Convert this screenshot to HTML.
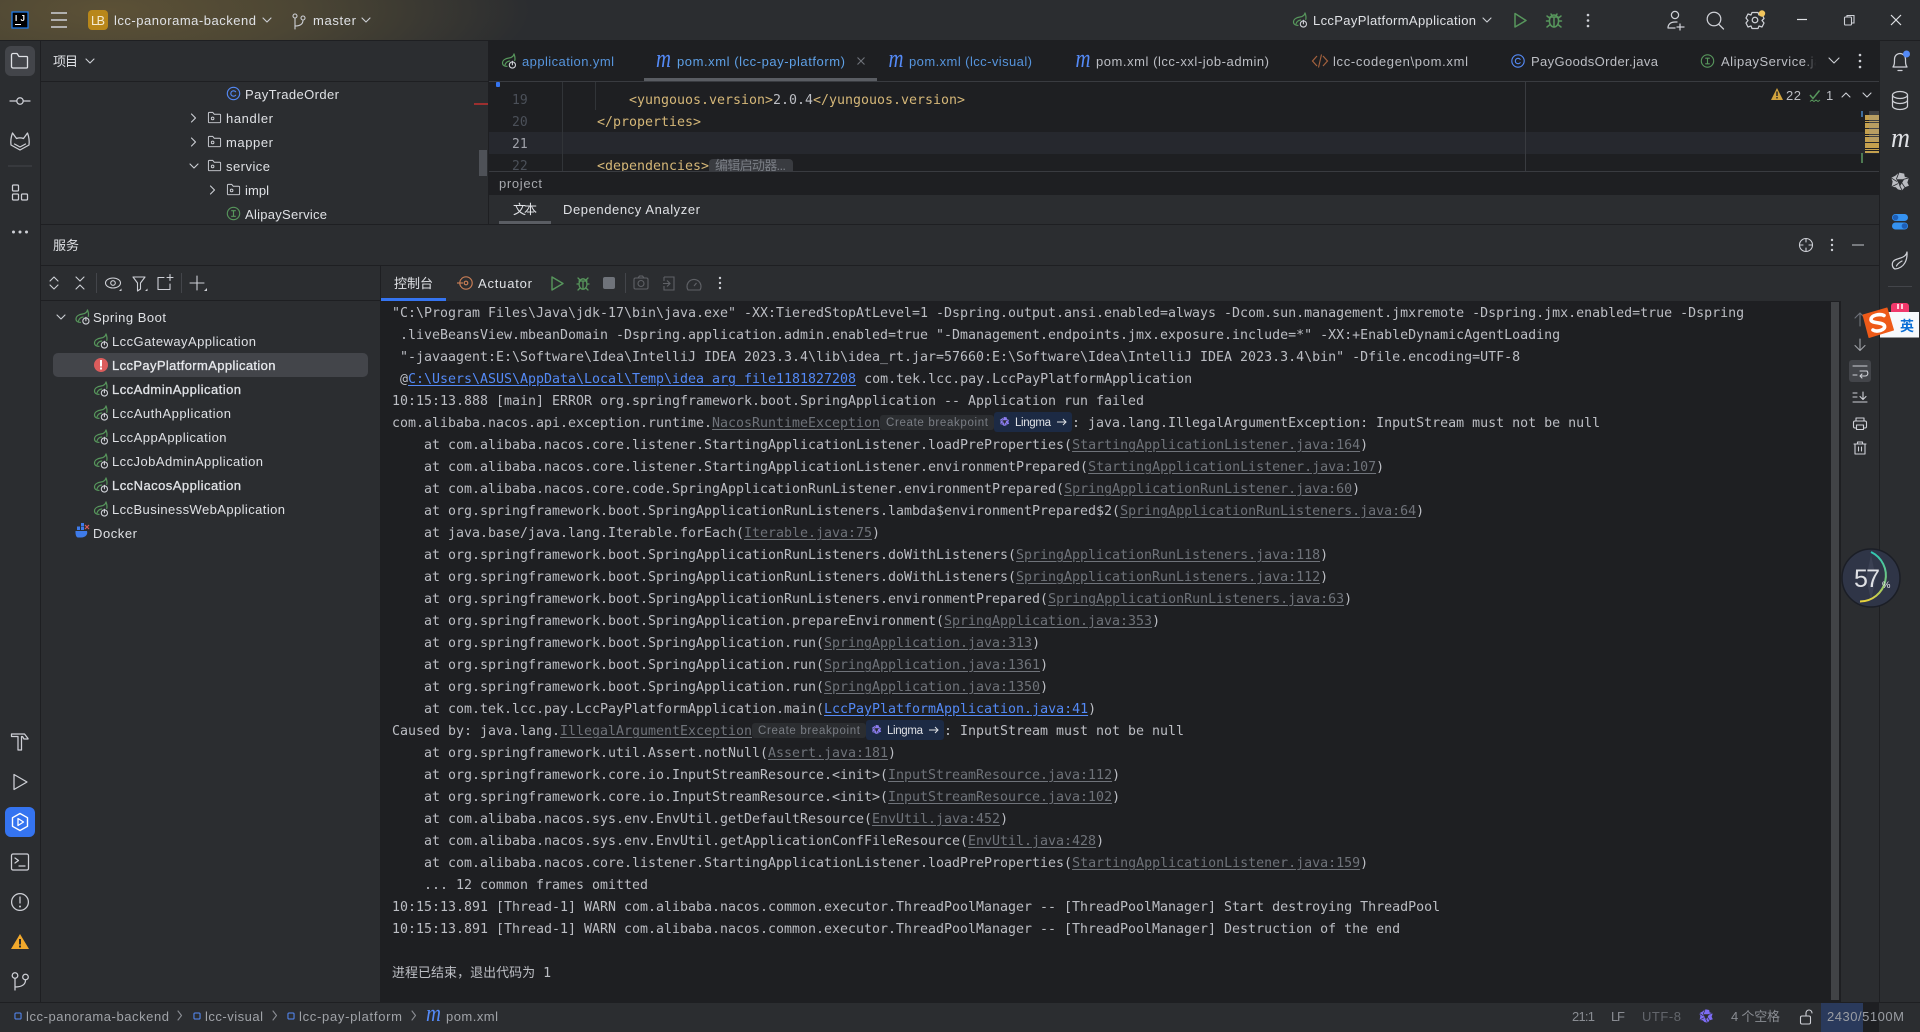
<!DOCTYPE html>
<html lang="zh"><head><meta charset="utf-8"><title>lcc-panorama-backend</title>
<style>
html,body{margin:0;padding:0;background:#2b2d30;width:1920px;height:1032px;overflow:hidden}
.p{position:absolute}
#console,#code{font-family:"DejaVu Sans Mono","Noto Sans CJK SC",monospace;font-size:13.28px;line-height:22px;white-space:pre;color:#bcbec4;position:absolute;overflow:hidden;letter-spacing:.014px}
#console{left:392px;top:303px;width:1436px;height:698px}
#console div{height:22px}
#console u{color:#6f737a;text-decoration:underline;text-underline-offset:2px}
#console b{font-weight:normal;color:#548af7;text-decoration:underline;text-underline-offset:2px}
#console i{display:inline-block;font-style:normal;width:192px}
#console em{font-style:normal;font-size:13px}
#code{left:597px;top:81px;width:900px;height:90px}
#code div{height:22px;color:#d5b778}
#code s{text-decoration:none;color:#bcbec4}
svg{position:absolute;left:0;top:0}
svg text{font-family:"Liberation Sans","Noto Sans CJK SC",sans-serif;font-size:13px;fill:#dfe1e5}
.st{fill:none;stroke:#ced0d6;stroke-width:1.25;stroke-linecap:round;stroke-linejoin:round}
.d{fill:none;stroke:#ced0d6;stroke-width:1.1;stroke-linecap:round;stroke-linejoin:round}
.dc{fill:none;stroke:#8a8d93;stroke-width:1.1;stroke-linecap:round;stroke-linejoin:round}
</style></head><body>

<div class="p" style="left:0;top:0;width:1920px;height:40px;background:radial-gradient(ellipse 420px 110px at 110px 10px,#5c5136 0,#4c4634 45%,#2b2d30 100%)"></div>
<div class="p" style="left:0;top:40px;width:1920px;height:1px;background:#1e1f22"></div>
<div class="p" style="left:40px;top:41px;width:1px;height:962px;background:#1e1f22"></div>
<div class="p" style="left:1879px;top:41px;width:1px;height:962px;background:#1e1f22"></div>

<!-- project panel -->
<div class="p" style="left:41px;top:81px;width:447px;height:1px;background:#1e1f22"></div>
<div class="p" style="left:488px;top:41px;width:1px;height:184px;background:#1e1f22"></div>
<div class="p" style="left:474px;top:103px;width:14px;height:2px;background:#9c2f2f"></div>
<div class="p" style="left:479px;top:150px;width:8px;height:26px;background:#4e5157"></div>

<!-- editor -->
<div class="p" style="left:489px;top:41px;width:1390px;height:40px;background:#1e1f22"></div>
<div class="p" style="left:489px;top:81px;width:1390px;height:1px;background:#393b40"></div>
<div class="p" style="left:644px;top:78px;width:233px;height:3px;background:#5a5d63"></div>
<div class="p" style="left:489px;top:82px;width:1390px;height:89px;background:#1e1f22"></div>
<div class="p" style="left:489px;top:132px;width:1390px;height:22px;background:#26282e"></div>
<div class="p" style="left:562px;top:82px;width:1px;height:89px;background:#313438"></div>
<div class="p" style="left:595px;top:82px;width:1px;height:28px;background:#313438"></div>
<div class="p" style="left:1525px;top:82px;width:1px;height:89px;background:#393b40"></div>
<div class="p" style="left:496px;top:82px;width:4px;height:5px;background:#3574f0;border-radius:1px"></div>
<div id="code"><div style="height:9px"></div><div>    &lt;yungouos.version&gt;<s>2.0.4</s>&lt;/yungouos.version&gt;</div><div>&lt;/properties&gt;</div><div></div><div>&lt;dependencies&gt;</div></div>
<div class="p" style="left:709px;top:159px;width:84px;height:12px;background:#393b40;border-radius:4px 4px 0 0"></div>
<div class="p" style="left:489px;top:171px;width:1390px;height:1px;background:#393b40"></div>
<div class="p" style="left:489px;top:172px;width:1390px;height:23px;background:#1e1f22"></div>
<div class="p" style="left:489px;top:195px;width:1390px;height:28px;background:#2b2d30"></div>
<div class="p" style="left:499px;top:221px;width:52px;height:3px;background:#5a5d63"></div>
<div class="p" style="left:41px;top:224px;width:1838px;height:1px;background:#1e1f22"></div>
<div class="p" style="left:41px;top:265px;width:1838px;height:1px;background:#1e1f22"></div>

<!-- minimap -->
<div class="p" style="left:1861px;top:111px;width:2px;height:6px;background:#3f6d9c"></div>
<div class="p" style="left:1865px;top:115px;width:14px;height:38px;background:repeating-linear-gradient(180deg,#c4a04e 0 5px,#1e1f22 5px 6px,#c4a04e 6px 7px,#1e1f22 7px 8px,#c4a04e 8px 13px,#26282e 13px 14px)"></div>
<div class="p" style="left:1869px;top:111px;width:10px;height:30px;background:rgba(150,150,150,.28)"></div>
<div class="p" style="left:1861px;top:153px;width:2px;height:10px;background:#4e7a52"></div>

<!-- services -->
<div class="p" style="left:380px;top:266px;width:1px;height:737px;background:#1e1f22"></div>
<div class="p" style="left:41px;top:300px;width:339px;height:1px;background:#1e1f22"></div>
<div class="p" style="left:53px;top:353px;width:315px;height:24px;background:#43454a;border-radius:5px"></div>
<div class="p" style="left:381px;top:298px;width:65px;height:3px;background:#3574f0"></div>
<div class="p" style="left:381px;top:301px;width:1459px;height:702px;background:#1e1f22"></div>
<div class="p" style="left:1831px;top:302px;width:8px;height:698px;background:#414346"></div>
<div class="p" style="left:1840px;top:301px;width:1px;height:702px;background:#1e1f22"></div>

<div id="console"><div>"C:\Program Files\Java\jdk-17\bin\java.exe" -XX:TieredStopAtLevel=1 -Dspring.output.ansi.enabled=always -Dcom.sun.management.jmxremote -Dspring.jmx.enabled=true -Dspring</div><div> .liveBeansView.mbeanDomain -Dspring.application.admin.enabled=true "-Dmanagement.endpoints.jmx.exposure.include=*" -XX:+EnableDynamicAgentLoading</div><div> "-javaagent:E:\Software\Idea\IntelliJ IDEA 2023.3.4\lib\idea_rt.jar=57660:E:\Software\Idea\IntelliJ IDEA 2023.3.4\bin" -Dfile.encoding=UTF-8</div><div> @<b>C:\Users\ASUS\AppData\Local\Temp\idea_arg_file1181827208</b> com.tek.lcc.pay.LccPayPlatformApplication</div><div>10:15:13.888 [main] ERROR org.springframework.boot.SpringApplication -- Application run failed</div><div>com.alibaba.nacos.api.exception.runtime.<u>NacosRuntimeException</u><i></i>: java.lang.IllegalArgumentException: InputStream must not be null</div><div>    at com.alibaba.nacos.core.listener.StartingApplicationListener.loadPreProperties(<u>StartingApplicationListener.java:164</u>)</div><div>    at com.alibaba.nacos.core.listener.StartingApplicationListener.environmentPrepared(<u>StartingApplicationListener.java:107</u>)</div><div>    at com.alibaba.nacos.core.code.SpringApplicationRunListener.environmentPrepared(<u>SpringApplicationRunListener.java:60</u>)</div><div>    at org.springframework.boot.SpringApplicationRunListeners.lambda$environmentPrepared$2(<u>SpringApplicationRunListeners.java:64</u>)</div><div>    at java.base/java.lang.Iterable.forEach(<u>Iterable.java:75</u>)</div><div>    at org.springframework.boot.SpringApplicationRunListeners.doWithListeners(<u>SpringApplicationRunListeners.java:118</u>)</div><div>    at org.springframework.boot.SpringApplicationRunListeners.doWithListeners(<u>SpringApplicationRunListeners.java:112</u>)</div><div>    at org.springframework.boot.SpringApplicationRunListeners.environmentPrepared(<u>SpringApplicationRunListeners.java:63</u>)</div><div>    at org.springframework.boot.SpringApplication.prepareEnvironment(<u>SpringApplication.java:353</u>)</div><div>    at org.springframework.boot.SpringApplication.run(<u>SpringApplication.java:313</u>)</div><div>    at org.springframework.boot.SpringApplication.run(<u>SpringApplication.java:1361</u>)</div><div>    at org.springframework.boot.SpringApplication.run(<u>SpringApplication.java:1350</u>)</div><div>    at com.tek.lcc.pay.LccPayPlatformApplication.main(<b>LccPayPlatformApplication.java:41</b>)</div><div>Caused by: java.lang.<u>IllegalArgumentException</u><i></i>: InputStream must not be null</div><div>    at org.springframework.util.Assert.notNull(<u>Assert.java:181</u>)</div><div>    at org.springframework.core.io.InputStreamResource.&lt;init&gt;(<u>InputStreamResource.java:112</u>)</div><div>    at org.springframework.core.io.InputStreamResource.&lt;init&gt;(<u>InputStreamResource.java:102</u>)</div><div>    at com.alibaba.nacos.sys.env.EnvUtil.getDefaultResource(<u>EnvUtil.java:452</u>)</div><div>    at com.alibaba.nacos.sys.env.EnvUtil.getApplicationConfFileResource(<u>EnvUtil.java:428</u>)</div><div>    at com.alibaba.nacos.core.listener.StartingApplicationListener.loadPreProperties(<u>StartingApplicationListener.java:159</u>)</div><div>    ... 12 common frames omitted</div><div>10:15:13.891 [Thread-1] WARN com.alibaba.nacos.common.executor.ThreadPoolManager -- [ThreadPoolManager] Start destroying ThreadPool</div><div>10:15:13.891 [Thread-1] WARN com.alibaba.nacos.common.executor.ThreadPoolManager -- [ThreadPoolManager] Destruction of the end</div><div></div><div><em>进程已结束，退出代码为</em> 1</div></div>

<!-- status bar -->
<div class="p" style="left:0;top:1002px;width:1920px;height:1px;background:#1e1f22"></div>
<div class="p" style="left:1821px;top:1003px;width:42px;height:29px;background:#2a3a5c"></div>
<div class="p" style="left:1863px;top:1003px;width:16px;height:29px;background:#1e1f22"></div>

<svg width="1920" height="1032" viewBox="0 0 1920 1032" xmlns="http://www.w3.org/2000/svg">
<defs>
<symbol id="spring" viewBox="0 0 16 16"><path d="M13 1C12.5 3.6 10.8 4.6 8 5C4.2 5.5 1.5 7.3 1.5 10C1.5 12.2 3.4 13.4 6 13.4" fill="none" stroke="#57965c" stroke-width="1.2" stroke-linecap="round"/><path d="M13 1C14 3.5 14.2 5.6 13.8 7.4M4 12C4.6 9.6 6.2 8.4 8.6 8" fill="none" stroke="#57965c" stroke-width="1.2" stroke-linecap="round"/><circle cx="11.4" cy="12" r="3.1" fill="none" stroke="#ced0d6" stroke-width="1.1"/><path d="M11.4 8.3V11.8" stroke="#ced0d6" stroke-width="1.1" stroke-linecap="round"/></symbol>
<symbol id="folder" viewBox="0 0 16 16"><path d="M1.5 3.5a1 1 0 0 1 1-1h3.6l1.6 2h5.8a1 1 0 0 1 1 1v7a1 1 0 0 1-1 1h-11a1 1 0 0 1-1-1z" fill="none" stroke="#ced0d6" stroke-width="1"/><circle cx="6" cy="9" r="1.4" fill="none" stroke="#ced0d6" stroke-width="1"/></symbol>
<symbol id="cls" viewBox="0 0 16 16"><circle cx="8" cy="8" r="6.6" fill="none" stroke="#548af7" stroke-width="1.2"/><path d="M10.3 6.2A2.9 2.9 0 1 0 10.3 9.8" fill="none" stroke="#548af7" stroke-width="1.2" stroke-linecap="round"/></symbol>
<symbol id="ifc" viewBox="0 0 16 16"><circle cx="8" cy="8" r="6.6" fill="none" stroke="#57965c" stroke-width="1.2"/><path d="M6 5h4M6 11h4M8 5v6" fill="none" stroke="#57965c" stroke-width="1.2" stroke-linecap="round"/></symbol>
<symbol id="mod" viewBox="0 0 10 10"><rect x="1.2" y="1.2" width="7.6" height="7.6" rx="1.2" fill="none" stroke="#548af7" stroke-width="1.3"/></symbol>
<symbol id="star" viewBox="0 0 20 20"><path d="M9 1.5L14 2.5L14.5 5.5L18.5 6.5L17 11L18.500 14L14.500 15.500L12 18.500L8 17.500L6 15.500L2 15L3 10L1.500 6.500L5.500 4.500Z" fill="currentColor"/><path d="M6.500 7.800H14L10 14.500Z" fill="#2b2d30"/><path d="M9 1.500L6.500 7.800M18.500 6.500L13.200 8M12 18.500L9.500 13.500M1.500 6.500L7 10M14.500 15.500L11.500 11M2 15L8 12" fill="none" stroke="#2b2d30" stroke-width=".8"/></symbol>
<linearGradient id="fade" x1="0" y1="0" x2="1" y2="0"><stop offset="0" stop-color="#1e1f22" stop-opacity="0"/><stop offset="1" stop-color="#1e1f22"/></linearGradient>
<linearGradient id="arc" x1="0" y1="0" x2="0" y2="1"><stop offset="0" stop-color="#2fc7b4"/><stop offset=".6" stop-color="#7ac77a"/><stop offset="1" stop-color="#e8d23c"/></linearGradient>
</defs>

<!-- TITLE BAR -->
<rect x="12" y="12" width="16" height="16" fill="#000" stroke="#1a7df2" stroke-width="1.2"/>
<text x="15" y="21" style="font-size:8px;font-weight:700;fill:#fff" textLength="10">IJ</text>
<rect x="15" y="24" width="6" height="1" fill="#fff"/>
<path d="M51 13H67M51 20H67M51 27H67" stroke="#ced0d6" stroke-width="1.4"/>
<rect x="88" y="10" width="20" height="20" rx="4" fill="#b8871a"/>
<text x="91" y="25" style="font-size:12.5px;fill:#f4ead0" textLength="14">LB</text>
<text x="114" y="25" textLength="142">lcc-panorama-backend</text>
<path d="M263 18l4 4 4-4" class="d"/>
<g class="d"><circle cx="295" cy="16" r="2"/><circle cx="303" cy="18" r="2"/><path d="M295 18V29M295 26C300 26 303 24 303 20"/></g>
<text x="313" y="25" textLength="43">master</text>
<path d="M362 18l4 4 4-4" class="d"/>
<use href="#spring" x="1292" y="12" width="16" height="16"/>
<text x="1313" y="25" textLength="163">LccPayPlatformApplication</text>
<path d="M1483 18l4 4 4-4" class="d"/>
<path d="M1515 13.5L1526 20.5L1515 27Z" fill="none" stroke="#57965c" stroke-width="1.5" stroke-linejoin="round"/>
<g fill="none" stroke="#57965c" stroke-width="1.5" stroke-linecap="round"><ellipse cx="1554" cy="21" rx="4.6" ry="6"/><path d="M1550 17h8M1554 17v10M1551 14l1 1.6M1557 14l-1 1.6M1547 16l2.5 2M1561 16l-2.5 2M1546.5 21h3M1558.5 21h3M1547 27l2.5-2M1561 27l-2.5-2"/></g>
<circle cx="1588" cy="15" r="1.3" fill="#ced0d6"/><circle cx="1588" cy="20.5" r="1.3" fill="#ced0d6"/><circle cx="1588" cy="26" r="1.3" fill="#ced0d6"/>
<g class="st"><circle cx="1675" cy="15" r="3.6"/><path d="M1668 28C1668 24 1671 22 1675 22H1677M1668 28H1675M1680 24V30M1677 27H1684"/></g>
<g class="st" stroke-width="1.5"><circle cx="1714" cy="19" r="6.8"/><path d="M1719 24.5L1723.5 29"/></g>
<g class="st"><circle cx="1755" cy="20" r="2.8"/><path d="M1752 12.5H1758L1759 15L1762 14L1764 18.5L1762 20.5L1764 23L1762 27L1759 26L1758 28.5H1752L1751 26L1748 27L1746 23L1748 20.5L1746 18L1748 14L1751 15Z"/></g>
<circle cx="1762" cy="13.5" r="3.2" fill="#f2c55c"/>
<path d="M1797 19.5H1807" stroke="#dfe1e5" stroke-width="1.2"/>
<g fill="none" stroke="#ced0d6" stroke-width="1.1"><rect x="1844.5" y="17" width="7" height="8" rx="1"/><path d="M1847 17V15.5h7v7.5h-2.5"/></g>
<path d="M1891 15L1901 25M1901 15L1891 25" stroke="#dfe1e5" stroke-width="1.2"/>

<!-- LEFT STRIPE -->
<rect x="5" y="46" width="30" height="30" rx="6" fill="#43454a"/>
<path d="M11.5 55a1.5 1.5 0 0 1 1.5-1.5h4l2 3h7.5a1 1 0 0 1 1 1V67a1 1 0 0 1-1 1H13a1.5 1.5 0 0 1-1.5-1.5z" fill="none" stroke="#dfe1e5" stroke-width="1.3" stroke-linejoin="round"/>
<g class="st"><circle cx="20" cy="101" r="3.2"/><path d="M10 101H16.8M23.2 101H30"/></g>
<path class="st" d="M12.500 133L16.500 138.500C18.500 137.800 21.500 137.800 23.500 138.500L27.500 133C29 137 29.500 141 29 145L20 150L11 145C10.500 141 11 137 12.500 133Z"/>
<path class="st" d="M14.500 144L20 147L25.500 144"/>
<rect x="8" y="165.5" width="24" height="1" fill="#43454a"/>
<g class="st"><rect x="12.5" y="185" width="6" height="6" rx="1"/><rect x="12.5" y="194" width="6" height="6" rx="1"/><rect x="21.5" y="194" width="6" height="6" rx="1"/></g>
<circle cx="13.5" cy="232" r="1.5" fill="#ced0d6"/><circle cx="20" cy="232" r="1.5" fill="#ced0d6"/><circle cx="26.5" cy="232" r="1.5" fill="#ced0d6"/>
<path class="st" d="M11.5 734H24.5L28 738.5V739H24L22.5 736.5H21.5V750H18V736.5H11.5Z"/>
<path class="st" d="M14 774.5L27 782L14 789.5Z" stroke-width="1.4"/>
<rect x="5" y="807" width="30" height="30" rx="6" fill="#3574f0"/>
<path d="M20 813.5L27.5 817.7V826.3L20 830.5L12.5 826.3V817.7Z" fill="none" stroke="#fff" stroke-width="1.4" stroke-linejoin="round"/>
<path d="M18 818.5L23.5 822L18 825.5Z" fill="none" stroke="#fff" stroke-width="1.3" stroke-linejoin="round"/>
<g class="st"><rect x="11.5" y="854" width="17" height="16" rx="1.5"/><path d="M15 858l3.5 2.5L15 863M19 866H25"/></g>
<g class="st"><circle cx="20" cy="902" r="8.4"/><path d="M20 897V903"/></g><circle cx="20" cy="906.5" r="1" fill="#ced0d6"/>
<path d="M20 934L29 949H11Z" fill="#f2a92c"/><rect x="19" y="939" width="2" height="5.5" fill="#2b2d30"/><rect x="19" y="945.5" width="2" height="2" fill="#2b2d30"/>
<g class="st"><circle cx="15" cy="975.5" r="2.8"/><circle cx="25.5" cy="977" r="2.8"/><path d="M15 978.5V990M15 987C21 987 25.5 985 25.5 980"/></g>

<!-- PROJECT HEADER & TREE -->
<text x="53" y="66" style="font-size:13px;fill:#dfe1e5" textLength="25">项目</text>
<path d="M86 59l4 4 4-4" class="d"/>
<use href="#cls" x="226" y="86" width="15" height="15"/>
<text x="245" y="99" textLength="94">PayTradeOrder</text>
<path class="d" d="M191.5 114l4 4-4 4"/><use href="#folder" x="207" y="110" width="15" height="15"/><text x="226" y="123" textLength="47">handler</text>
<path class="d" d="M191.5 138l4 4-4 4"/><use href="#folder" x="207" y="134" width="15" height="15"/><text x="226" y="147" textLength="47">mapper</text>
<path class="d" d="M190 164l4 4 4-4"/><use href="#folder" x="207" y="158" width="15" height="15"/><text x="226" y="171" textLength="44">service</text>
<path class="d" d="M210.5 186l4 4-4 4"/><use href="#folder" x="226" y="182" width="15" height="15"/><text x="245" y="195" textLength="24">impl</text>
<svg x="0" y="0" width="488" height="224" style="overflow:hidden" viewBox="0 0 488 224"><use href="#ifc" x="226" y="206" width="15" height="15"/><text x="245" y="219" textLength="82">AlipayService</text></svg>

<!-- TABS -->
<use href="#spring" x="501" y="53" width="16" height="16"/>
<text x="522" y="66" style="fill:#5694dc" textLength="92">application.yml</text>
<text x="656" y="67" style="font-family:'Liberation Serif',serif;font-style:italic;font-size:26px;fill:#548af7" textLength="15" lengthAdjust="spacingAndGlyphs">m</text>
<text x="677" y="66" style="fill:#5ea0e6" textLength="168">pom.xml (lcc-pay-platform)</text>
<path d="M857.5 57.5l7 7M864.5 57.5l-7 7" stroke="#6f737a" stroke-width="1.1"/>
<text x="888.5" y="67" style="font-family:'Liberation Serif',serif;font-style:italic;font-size:26px;fill:#548af7" textLength="15" lengthAdjust="spacingAndGlyphs">m</text>
<text x="909" y="66" style="fill:#5694dc" textLength="123">pom.xml (lcc-visual)</text>
<text x="1075.5" y="67" style="font-family:'Liberation Serif',serif;font-style:italic;font-size:26px;fill:#548af7" textLength="15" lengthAdjust="spacingAndGlyphs">m</text>
<text x="1096" y="66" style="fill:#bcbec4" textLength="173">pom.xml (lcc-xxl-job-admin)</text>
<path d="M1317 56L1312.5 61L1317 66M1323 56L1327.5 61L1323 66" fill="none" stroke="#a5623e" stroke-width="1.2"/><path d="M1321.5 54.5L1318.5 67.5" stroke="#a5623e" stroke-width="1.1"/>
<text x="1333" y="66" style="fill:#bcbec4" textLength="135">lcc-codegen\pom.xml</text>
<use href="#cls" x="1510.5" y="53.5" width="15" height="15"/>
<text x="1531" y="66" style="fill:#bcbec4" textLength="127">PayGoodsOrder.java</text>
<use href="#ifc" x="1700" y="53.5" width="15" height="15"/>
<svg x="0" y="0" width="1816" height="82" viewBox="0 0 1816 82"><text x="1721" y="66" style="fill:#bcbec4" textLength="115">AlipayService.java</text></svg>
<rect x="1804" y="45" width="12" height="30" fill="url(#fade)"/>
<path d="M1829 58l5 5 5-5" class="d"/>
<circle cx="1860" cy="55" r="1.3" fill="#ced0d6"/><circle cx="1860" cy="61" r="1.3" fill="#ced0d6"/><circle cx="1860" cy="67" r="1.3" fill="#ced0d6"/>

<!-- EDITOR -->
<text x="512" y="104" style="font-family:'DejaVu Sans Mono',monospace;font-size:13px;fill:#4b5059">19</text>
<text x="512" y="126" style="font-family:'DejaVu Sans Mono',monospace;font-size:13px;fill:#4b5059">20</text>
<text x="512" y="148" style="font-family:'DejaVu Sans Mono',monospace;font-size:13px;fill:#a1a3ab">21</text>
<svg x="0" y="0" width="1920" height="171" viewBox="0 0 1920 171"><text x="512" y="170" style="font-family:'DejaVu Sans Mono',monospace;font-size:13px;fill:#4b5059">22</text><text x="715" y="170" style="fill:#7a7e85" textLength="71">编辑启动器...</text></svg>
<path d="M1777 88L1783 100H1771Z" fill="#d2a33e"/><rect x="1776.3" y="91.5" width="1.4" height="4.5" fill="#1e1f22"/><rect x="1776.3" y="97" width="1.4" height="1.5" fill="#1e1f22"/>
<text x="1786" y="100" textLength="15" style="fill:#bcbec4">22</text>
<path d="M1810 95l3 3.5 6.5-8" fill="none" stroke="#57965c" stroke-width="1.5"/><path d="M1810 101.5l2-1.5 2 1.5 2-1.5 2 1.5 2-1.5" fill="none" stroke="#57965c" stroke-width="1"/>
<text x="1826" y="100" style="fill:#bcbec4">1</text>
<path class="d" d="M1842 97l4-4 4 4M1863 93l4 4 4-4"/>
<text x="499" y="188" textLength="43" style="fill:#a7a9ae">project</text>
<text x="513" y="214" textLength="24" style="fill:#dfe1e5">文本</text>
<text x="563" y="214" textLength="137" style="fill:#dfe1e5">Dependency Analyzer</text>

<!-- SERVICES HEADER -->
<text x="53" y="250" textLength="26">服务</text>
<g class="d"><circle cx="1806" cy="245" r="6.5"/><path d="M1806 238.5V242M1806 248V251.5M1799.5 245H1803M1809 245H1812.5"/></g>
<circle cx="1832" cy="240" r="1.2" fill="#ced0d6"/><circle cx="1832" cy="245" r="1.2" fill="#ced0d6"/><circle cx="1832" cy="250" r="1.2" fill="#ced0d6"/>
<path d="M1852 245H1864" stroke="#a0a3a8" stroke-width="1.3"/>

<!-- SERVICES TOOLBAR -->
<g class="d"><path d="M50 281l4-4 4 4M50 285l4 4 4-4"/><path d="M76 277l4 4 4-4M76 289l4-4 4 4"/>
<ellipse cx="113" cy="283" rx="7.5" ry="5"/><circle cx="113" cy="283" r="2.3"/>
<path d="M133 277H145L140.5 283V289L137.5 291V283Z"/>
<path d="M158 277.5H164M158 277.5V289.5H170V284M170 274.5V280.5M167 277.5H173"/>
<path d="M197 276V290M190 283H204"/></g>
<rect x="96" y="273" width="1" height="20" fill="#43454a"/><rect x="181" y="273" width="1" height="20" fill="#43454a"/>
<path d="M119 291h2.5v-2.5zM145 291h2.5v-2.5zM204 291h3v-3z" fill="#ced0d6"/>
<text x="394" y="288" textLength="39">控制台</text>
<g fill="none" stroke="#c77d55" stroke-width="1.2"><circle cx="466" cy="283" r="6.2"/><circle cx="466" cy="283" r="1.8"/><path d="M457 283H463"/></g>
<rect x="458" y="276" width="3" height="3" fill="#2b2d30"/><rect x="458" y="287" width="3" height="3" fill="#2b2d30"/>
<text x="478" y="288" textLength="54">Actuator</text>
<path d="M552 277L563 283.5L552 290Z" fill="none" stroke="#57965c" stroke-width="1.4" stroke-linejoin="round"/>
<g fill="none" stroke="#57965c" stroke-width="1.3" stroke-linecap="round"><ellipse cx="583" cy="284" rx="4" ry="5.2"/><path d="M579 281h8M583 281v8M578 278l2 2M588 278l-2 2M577 284h2M587 284h2M578 290l2-2M588 290l-2-2"/></g>
<rect x="603" y="277" width="12" height="12" rx="2" fill="#6f737a"/>
<rect x="625" y="273" width="1" height="20" fill="#43454a"/>
<g fill="none" stroke="#5f6166" stroke-width="1.1"><rect x="634" y="278" width="14" height="11" rx="1.5"/><circle cx="641" cy="283.5" r="3"/><path d="M638 278l1.5-2h3l1.5 2"/></g>
<g fill="none" stroke="#5f6166" stroke-width="1.1"><path d="M664 277H674V290H664V286M664 281V277"/><path d="M663 283.5H670M667 280.5l3 3-3 3"/></g>
<g fill="none" stroke="#5f6166" stroke-width="1.1"><path d="M688 290A7 7 0 1 1 700 290Z"/><path d="M694 286l2.5-3"/></g>
<circle cx="720" cy="278" r="1.2" fill="#ced0d6"/><circle cx="720" cy="283" r="1.2" fill="#ced0d6"/><circle cx="720" cy="288" r="1.2" fill="#ced0d6"/>

<!-- SERVICES TREE -->
<g transform="translate(0,-1)">
<path class="d" d="M57 316l4 4 4-4"/>
<use href="#spring" x="74.5" y="310" width="16" height="16"/>
<text x="93" y="323" textLength="73">Spring Boot</text>
<use href="#spring" x="93" y="334" width="16" height="16"/>
<text x="112" y="347" textLength="144">LccGatewayApplication</text>
<circle cx="101" cy="366" r="7" fill="#db5c5c"/><rect x="100" y="361" width="2" height="6.500" fill="#fff"/><rect x="100" y="368.500" width="2" height="2" fill="#fff"/>
<text x="112" y="371" textLength="163.500" style="fill:#e6e8ec;stroke:#e6e8ec;stroke-width:.3">LccPayPlatformApplication</text>
<use href="#spring" x="93" y="382" width="16" height="16"/>
<text x="112" y="395" textLength="129" style="fill:#dfe1e5;stroke:#dfe1e5;stroke-width:.3">LccAdminApplication</text>
<use href="#spring" x="93" y="406" width="16" height="16"/>
<text x="112" y="419" textLength="119">LccAuthApplication</text>
<use href="#spring" x="93" y="430" width="16" height="16"/>
<text x="112" y="443" textLength="114.5">LccAppApplication</text>
<use href="#spring" x="93" y="454" width="16" height="16"/>
<text x="112" y="467" textLength="151">LccJobAdminApplication</text>
<use href="#spring" x="93" y="478" width="16" height="16"/>
<text x="112" y="491" textLength="129" style="fill:#dfe1e5;stroke:#dfe1e5;stroke-width:.3">LccNacosApplication</text>
<use href="#spring" x="93" y="502" width="16" height="16"/>
<text x="112" y="515" textLength="173">LccBusinessWebApplication</text>
<path d="M75.500 532H87C88 535 86 538.500 81 538.500H78C76 538.500 75.300 535 75.500 532Z" fill="#3e7bea"/>
<rect x="77" y="527.500" width="3" height="3.500" fill="#3e7bea"/><rect x="81" y="527.500" width="3" height="3.500" fill="#3e7bea"/><rect x="81" y="524" width="3" height="3" fill="#3e7bea"/>
<path d="M85 526l4 4M89 526l-4 4" stroke="#db5c5c" stroke-width="1.2"/>
<text x="93" y="539" textLength="44">Docker</text>
</g>

<!-- CONSOLE INLAYS -->
<rect x="880" y="415" width="114" height="15" rx="3" fill="#2b2d30"/>
<text x="886" y="426" style="font-size:11.5px;fill:#7a7e85" textLength="102">Create breakpoint</text>
<rect x="994" y="412" width="78" height="20" rx="3" fill="#1c2a44"/>
<use href="#star" x="999" y="416" width="11" height="11" style="color:#8a7cf0"/>
<text x="1015" y="426" style="font-size:11.5px;fill:#dfe1e5" textLength="36">Lingma</text>
<path d="M1057 422H1066M1063 419l3 3-3 3" fill="none" stroke="#dfe1e5" stroke-width="1"/>
<rect x="752" y="723" width="114" height="15" rx="3" fill="#2b2d30"/>
<text x="758" y="734" style="font-size:11.5px;fill:#7a7e85" textLength="102">Create breakpoint</text>
<rect x="866" y="720" width="78" height="20" rx="3" fill="#1c2a44"/>
<use href="#star" x="871" y="724" width="11" height="11" style="color:#8a7cf0"/>
<text x="887" y="734" style="font-size:11.5px;fill:#dfe1e5" textLength="36">Lingma</text>
<path d="M929 730H938M935 727l3 3-3 3" fill="none" stroke="#dfe1e5" stroke-width="1"/>

<!-- CONSOLE RIGHT TOOLBAR -->
<path d="M1860 313V326M1855 318l5-5 5 5" fill="none" stroke="#6f737a" stroke-width="1.1" stroke-linecap="round" stroke-linejoin="round"/>
<path d="M1860 339V350M1855 345.500l5 5 5-5" fill="none" stroke="#a0a3a8" stroke-width="1.1" stroke-linecap="round" stroke-linejoin="round"/>
<rect x="1849" y="360" width="22" height="22" rx="3" fill="#43454a"/>
<path class="d" d="M1853 366H1867M1853 375H1857M1867 371H1860M1867 371C1868.500 373 1868 376 1865 376H1860M1862 374l-2 2 2 2"/>
<path class="d" d="M1853 393H1857M1853 397H1857M1853 402H1867M1863 392V399M1860 396.500l3 3 3-3"/>
<g class="d"><path d="M1856 421V418H1864V421"/><rect x="1853.500" y="421" width="13" height="7" rx="1.500"/><rect x="1856.500" y="425" width="7" height="4.500" fill="#2b2d30"/></g>
<g class="d"><path d="M1854 444H1866M1857.500 444V442H1862.500V444M1855 444.500V454H1865V444.500M1858.500 447V451M1861.500 447V451"/></g>

<!-- RIGHT STRIPE -->
<path class="st" d="M1893 67C1894.500 65 1894.500 63 1894.500 59A5.500 5.500 0 0 1 1905.500 59C1905.500 63 1905.500 65 1907 67ZM1898 70.500H1902"/>
<circle cx="1906.500" cy="54" r="3.500" fill="#548af7"/>
<g class="st"><ellipse cx="1900" cy="95" rx="7.500" ry="3.500"/><path d="M1892.500 95V106C1892.500 108 1896 109.500 1900 109.500C1904 109.500 1907.500 108 1907.500 106V95M1892.500 100C1892.500 102 1896 103.500 1900 103.500C1904 103.500 1907.500 102 1907.500 100"/></g>
<text x="1891" y="147" style="font-family:'Liberation Serif',serif;font-style:italic;font-size:28px;fill:#dfe1e5" textLength="19" lengthAdjust="spacingAndGlyphs">m</text>
<use href="#star" x="1889.500" y="171" width="21" height="21" style="color:#b9bbc0"/>
<rect x="1892" y="214" width="16" height="7" rx="3.500" fill="#3592f0"/><circle cx="1895.500" cy="217.500" r="2.800" fill="#1d5fb8"/>
<rect x="1892" y="222.500" width="16" height="7" rx="3.500" fill="#3592f0"/><circle cx="1904.500" cy="226" r="2.800" fill="#1d5fb8"/>
<path class="st" d="M1907 252C1907.500 259 1905 268 1895 269C1892.500 268 1892 265 1892.500 263C1893.500 259 1899 259 1903 257C1905 256 1906.500 254 1907 252ZM1896.500 266C1898 263 1900 262 1902 261"/>
<rect x="1888" y="286" width="24" height="1" fill="#43454a"/>

<!-- SOGOU -->
<rect x="1891" y="303" width="18" height="12" rx="3" fill="#f0386b"/>
<path d="M1898 304v5M1902 304v5" stroke="#fff" stroke-width="1.500"/>
<rect x="1880" y="312" width="39" height="25.500" fill="#f7f9fc"/>
<path d="M1863 315L1887 308L1893.500 330L1869 337.500Z" fill="#ee5a18" stroke="#ee5a18" stroke-width="1" stroke-linejoin="round"/>
<path d="M1884 315.500C1880 313.500 1871 315 1871 319.500C1871 324 1883 321.500 1884.500 326C1885.500 330 1877 332.500 1873 330" fill="none" stroke="#fff" stroke-width="3.600" stroke-linecap="round"/>
<text x="1900" y="331" style="font-size:14px;font-weight:700;fill:#0a6fd6" textLength="14">英</text>

<!-- 57 WIDGET -->
<circle cx="1871" cy="578" r="29" fill="#2f3547" stroke="#1b1e26" stroke-width="1.500"/>
<path d="M1871 555L1876 578L1871 600L1866 578Z" fill="#3a4053"/>
<path d="M1871 552A26 26 0 0 1 1860 601.500" fill="none" stroke="url(#arc)" stroke-width="2"/>
<text x="1854" y="587" style="font-size:25px;fill:#dfe1e5" textLength="26">57</text>
<text x="1882" y="588" style="font-size:9.500px;fill:#e6e8ec">%</text>

<!-- STATUS BAR -->
<g transform="translate(0,-1)">
<use href="#mod" x="14" y="1013" width="8" height="8"/><text x="26" y="1022" textLength="143" style="fill:#a0a3a8">lcc-panorama-backend</text>
<path class="dc" d="M178 1012l3.500 4.500-3.500 4.500"/>
<use href="#mod" x="193" y="1013" width="8" height="8"/><text x="205" y="1022" textLength="58" style="fill:#a0a3a8">lcc-visual</text>
<path class="dc" d="M273 1012l3.500 4.500-3.500 4.500"/>
<use href="#mod" x="287" y="1013" width="8" height="8"/><text x="299" y="1022" textLength="103" style="fill:#a0a3a8">lcc-pay-platform</text>
<path class="dc" d="M412 1012l3.500 4.500-3.500 4.500"/>
<text x="426" y="1022" style="font-family:'Liberation Serif',serif;font-style:italic;font-size:24px;fill:#548af7" textLength="15" lengthAdjust="spacingAndGlyphs">m</text>
<text x="446" y="1022" textLength="52" style="fill:#a0a3a8">pom.xml</text>
</g>
<text x="1572" y="1021" textLength="23" style="fill:#8a8d93">21:1</text>
<text x="1611" y="1021" textLength="14" style="fill:#8a8d93">LF</text>
<text x="1642" y="1021" textLength="39" style="fill:#63666c">UTF-8</text>
<use href="#star" x="1698" y="1008" width="16" height="16" style="color:#7d6cf5"/>
<text x="1731" y="1021" textLength="49" style="fill:#8a8d93">4 个空格</text>
<g class="d"><rect x="1800.500" y="1016" width="10" height="8" rx="1.500"/><path d="M1806 1016V1013A3 3 0 0 1 1812 1013"/></g>
<text x="1827" y="1021" textLength="77" style="fill:#9a9da3">2430/5100M</text>
</svg>
</body></html>
